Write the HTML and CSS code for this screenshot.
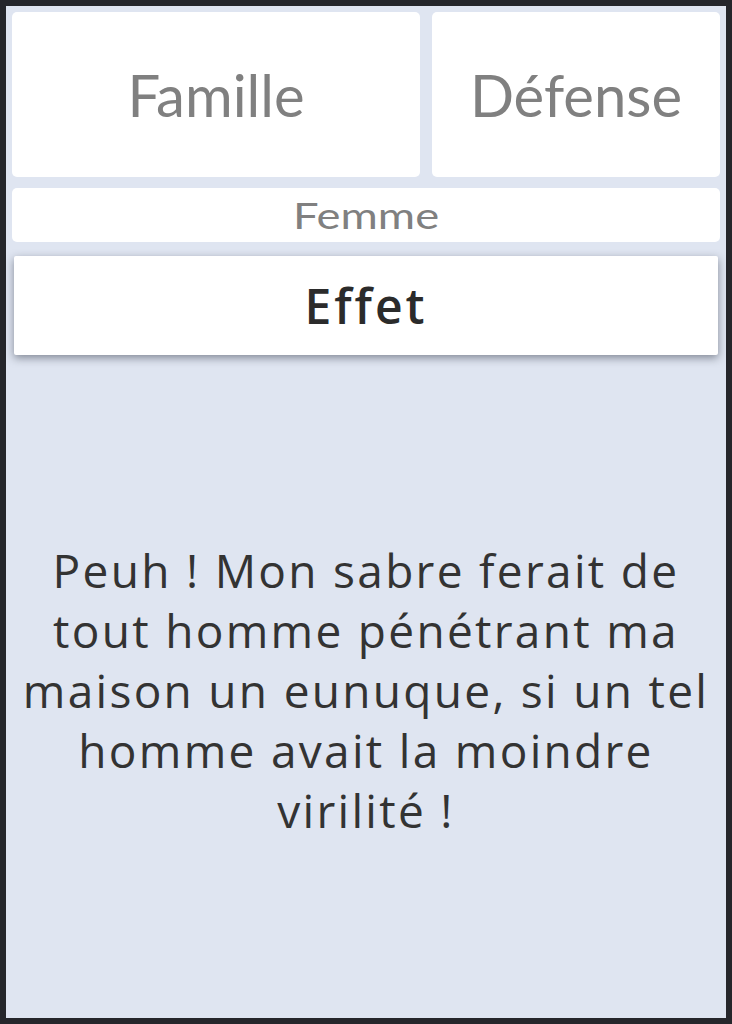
FILE: index.html
```html
<!DOCTYPE html>
<html lang="fr">
<head>
<meta charset="utf-8">
<title>Carte</title>
<link rel="stylesheet" href="styles.css">
</head>
<body>
<div class="screen">
  <div class="top-row">
    <div class="card card-family">Famille</div>
    <div class="card card-defense">Défense</div>
  </div>
  <div class="card card-gender"><span class="stretch">Femme</span></div>
  <div class="effect-bar">Effet</div>
  <div class="quote-area">
    <p class="quote">Peuh ! Mon sabre ferait de tout homme pénétrant ma maison un eunuque, si un tel homme avait la moindre virilité !</p>
  </div>
</div>
</body>
</html>
```
FILE: styles.css
```css
html, body {
  margin: 0;
  padding: 0;
}
body {
  background: #25262b;
  width: 732px;
  height: 1024px;
  padding: 6px;
  box-sizing: border-box;
}
.screen {
  background: #dfe5f1;
  height: 1012px;
  padding: 6px;
  box-sizing: border-box;
  display: flex;
  flex-direction: column;
}
.top-row {
  display: flex;
  gap: 12px;
  height: 165px;
}
.card {
  background: #ffffff;
  border-radius: 5px;
  color: #808080;
  font-family: Lato, "Liberation Sans", sans-serif;
  display: flex;
  align-items: center;
  justify-content: center;
}
.card-family {
  flex: 408 1 0;
  font-size: 58px;
}
.card-defense {
  flex: 288 1 0;
  font-size: 58px;
}
.card-gender {
  margin-top: 11px;
  height: 54px;
  font-size: 36px;
}
.stretch {
  display: inline-block;
  transform: scaleX(1.26);
}
.effect-bar {
  margin: 14px 2px 0;
  height: 99px;
  background: #ffffff;
  border-radius: 2px;
  box-shadow: 0 3px 9px rgba(40, 45, 60, 0.5);
  display: flex;
  align-items: center;
  justify-content: center;
  font-family: "Open Sans", "Noto Sans", sans-serif;
  font-weight: 600;
  font-size: 48px;
  letter-spacing: 3px;
  color: #2b2b2b;
}
.quote-area {
  flex: 1;
  display: flex;
  align-items: center;
  justify-content: center;
  padding: 12px 10px 0;
}
.quote {
  margin: 0;
  text-align: center;
  font-family: "Open Sans", "Noto Sans", sans-serif;
  font-size: 46px;
  letter-spacing: 2.3px;
  line-height: 60px;
  color: #333333;
}
```
